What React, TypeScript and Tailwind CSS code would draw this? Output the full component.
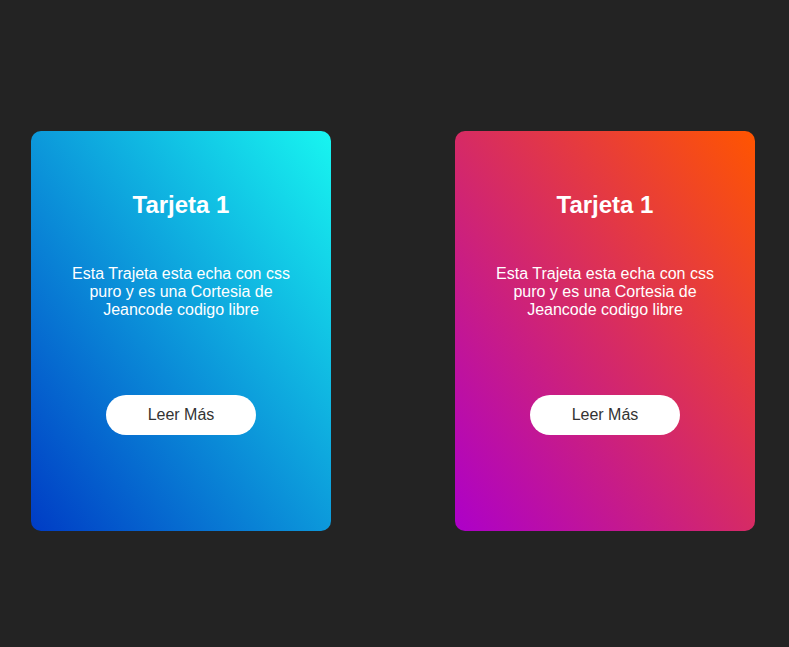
import React from "react";

function Card({ gradient }: { gradient: string }) {
  return (
    <div
      className={`w-[300px] h-[400px] shrink-0 rounded-[10px] flex flex-col items-center text-white text-center ${gradient}`}
    >
      <h2 className="mt-[60px] text-[24px] leading-[27px] font-bold">Tarjeta 1</h2>
      <p className="mt-[47px] w-[240px] text-[16px] leading-[18px]">
        Esta Trajeta esta echa con css puro y es una Cortesia de Jeancode codigo libre
      </p>
      <button className="mt-[76px] w-[150px] h-[40px] rounded-full bg-white text-[#333] text-[16px]">
        Leer Más
      </button>
    </div>
  );
}

export default function App() {
  return (
    <div
      className="w-full min-h-[647px] bg-[#232323] flex pt-[131px] pl-[31px] gap-[124px]"
      style={{ fontFamily: '"Liberation Sans", Arial, sans-serif' }}
    >
      <Card gradient="bg-[linear-gradient(to_top_right,#003cc5,#18f5f0)]" />
      <Card gradient="bg-[linear-gradient(to_top_right,#ad00c9,#ff5500)]" />
    </div>
  );
}
